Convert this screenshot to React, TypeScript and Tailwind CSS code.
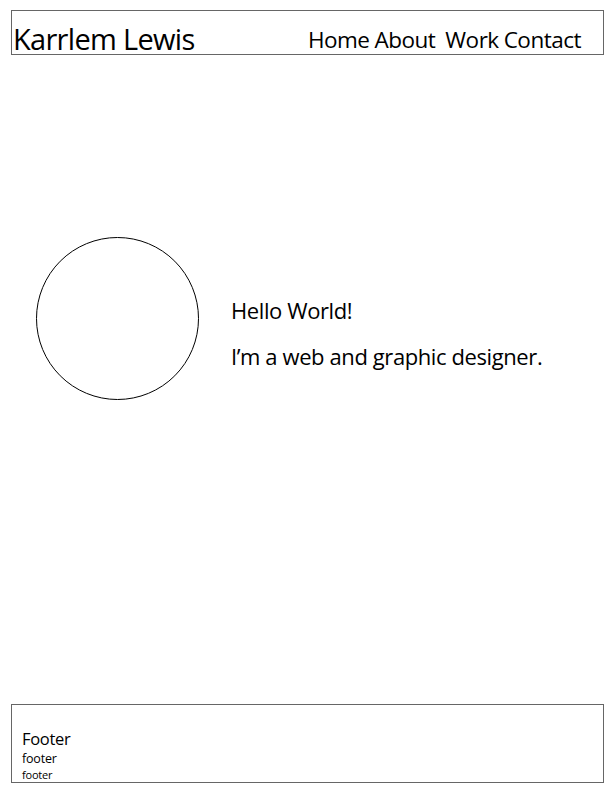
export default function App() {
  return (
    <div className="flex h-[792px] w-[612px] flex-col bg-white font-['Open_Sans',sans-serif] text-black">
      <header className="ml-[11px] mr-[8px] mt-[10px] flex h-[45px] items-end justify-between border border-[#666] pb-[1px] pl-[1px] pr-[22px]">
        <span className="text-[29px] leading-none tracking-[-0.7px]">Karrlem Lewis</span>
        <nav className="flex gap-[5px] pb-[2px] text-[22.5px] leading-none tracking-[-0.5px]">
          <span>Home</span>
          <span className="mr-[5px]">About</span>
          <span>Work</span>
          <span>Contact</span>
        </nav>
      </header>

      <main className="flex flex-1 items-center pb-[122px] pl-[36px]">
        <div className="h-[163px] w-[163px] rounded-full border border-black" />
        <div className="ml-[32px] flex flex-col gap-[18px] pt-[30px] text-[22px] leading-tight tracking-[-0.4px]">
          <p>Hello World!</p>
          <p>I’m a web and graphic designer.</p>
        </div>
      </main>

      <footer className="mb-[9px] ml-[11px] mr-[8px] flex h-[79px] flex-col justify-end border border-[#666] pl-[10px]">
        <p className="text-[16.5px] leading-[23px] tracking-[-0.3px]">Footer</p>
        <p className="text-[12.5px] leading-[17px] tracking-[-0.2px]">footer</p>
        <p className="text-[11px] leading-[15px] tracking-[-0.2px]">footer</p>
      </footer>
    </div>
  );
}
